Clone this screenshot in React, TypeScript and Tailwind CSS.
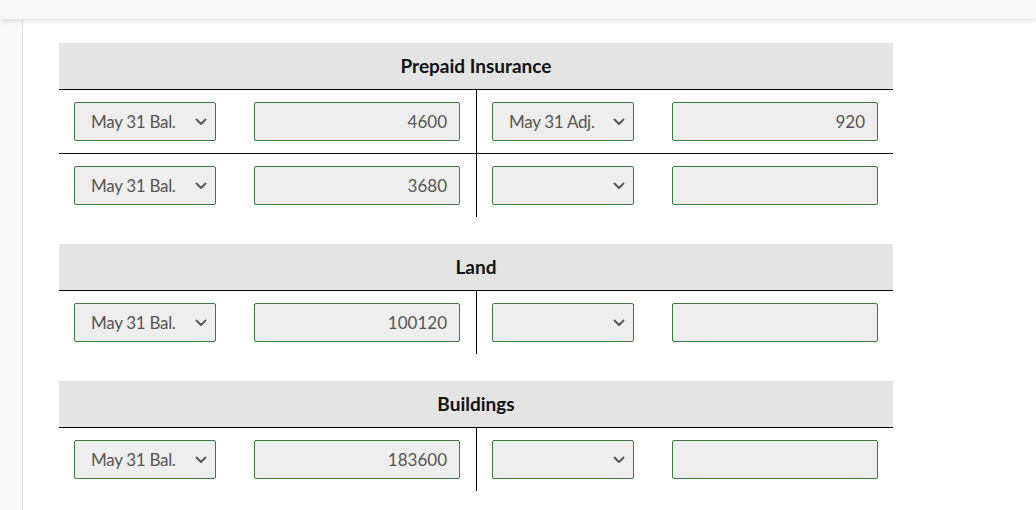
import React from "react";

type Row = { ls: string; lv: string; rs: string; rv: string };

const Chevron = () => (
  <svg width="12" height="8" viewBox="0 0 12 8" className="shrink-0">
    <path d="M1.5 1.5 L6 6 L10.5 1.5" fill="none" stroke="#555" strokeWidth="1.8" strokeLinecap="round" strokeLinejoin="round" />
  </svg>
);

const Select = ({ text }: { text: string }) => (
  <div className="w-[142px] h-[39px] box-border border border-[#3b7b3b] rounded-[2px] bg-[#eeeeee] flex items-center pl-[16px] pr-[8px] text-[17px] text-[#555555]">
    <span className="flex-1 whitespace-nowrap tracking-[-0.3px]">{text}</span>
    <Chevron />
  </div>
);

const Input = ({ value }: { value: string }) => (
  <div className="w-[206px] h-[39px] box-border border border-[#3b7b3b] rounded-[2px] bg-[#eeeeee] flex items-center justify-end pr-[12px] text-[17px] text-[#555555]">
    {value}
  </div>
);

const Account = ({ title, rows }: { title: string; rows: Row[] }) => (
  <div className="w-[834px]">
    <div className="h-[47px] box-border bg-[#e4e4e4] border-b border-black flex items-center justify-center text-[19px] font-bold text-[#111]">
      {title}
    </div>
    {rows.map((r, i) => (
      <div
        key={i}
        className={`grid grid-cols-[418px_1fr] ${i < rows.length - 1 ? "border-b border-black" : ""}`}
      >
        <div className="border-r border-black h-[63px] pt-[12px] pl-[15px] flex items-start gap-[38px]">
          <Select text={r.ls} />
          <Input value={r.lv} />
        </div>
        <div className="h-[63px] pt-[12px] pl-[15px] flex items-start gap-[38px]">
          <Select text={r.rs} />
          <Input value={r.rv} />
        </div>
      </div>
    ))}
  </div>
);

export default function App() {
  return (
    <div
      className="w-[1036px] h-[510px] bg-white overflow-hidden flex flex-col"
      style={{ fontFamily: "Lato, 'Noto Sans', sans-serif" }}
    >
      <div className="h-[19px] shrink-0 bg-[#f8f8f8] shadow-[0_2px_5px_rgba(0,0,0,0.12)] relative z-10" />
      <div className="flex flex-1">
        <div className="w-[23px] shrink-0 bg-[#f8f8f8] border-r border-[#dddddd]" />
        <div className="pl-[36px] pt-[24px] flex flex-col gap-[27px]">
          <Account
            title="Prepaid Insurance"
            rows={[
              { ls: "May 31 Bal.", lv: "4600", rs: "May 31 Adj.", rv: "920" },
              { ls: "May 31 Bal.", lv: "3680", rs: "", rv: "" },
            ]}
          />
          <Account title="Land" rows={[{ ls: "May 31 Bal.", lv: "100120", rs: "", rv: "" }]} />
          <Account title="Buildings" rows={[{ ls: "May 31 Bal.", lv: "183600", rs: "", rv: "" }]} />
        </div>
      </div>
    </div>
  );
}
